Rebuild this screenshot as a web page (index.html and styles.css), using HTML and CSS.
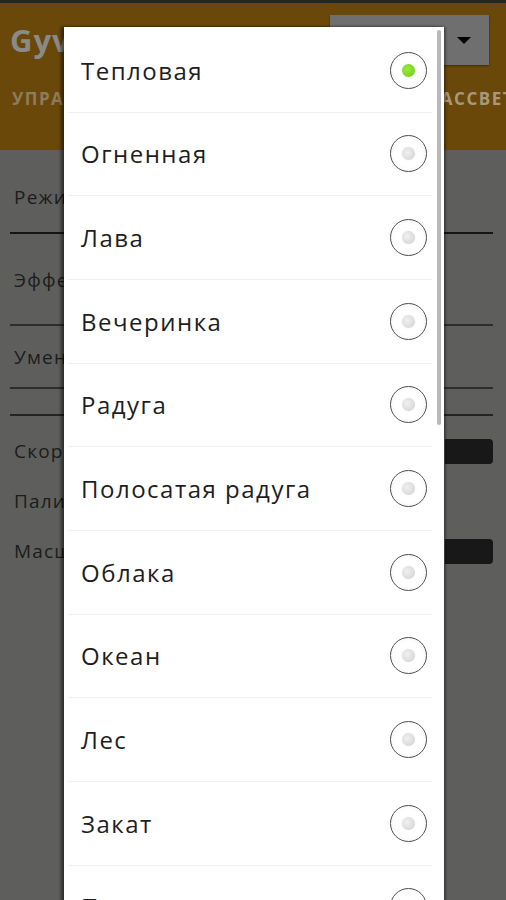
FILE: index.html
```html
<!DOCTYPE html>
<html lang="ru">
<head>
  <meta charset="UTF-8" />
  <meta name="viewport" content="width=device-width, initial-scale=1.0" />
  <title>GyverLamp</title>
  <link rel="stylesheet" href="styles.css">
</head>
<body>
  <div class="screen">
    <div class="statusline"></div>
    <header class="appbar">
      <div class="top">
        <h1>GyverLamp</h1>
        <div class="select"><span class="caret"></span></div>
      </div>
      <nav class="tabs">
        <span>УПРАВЛЕНИЕ</span>
        <span class="right">РАССВЕТ</span>
      </nav>
    </header>
    <main class="form">
      <div class="row r1"><span>Режим</span></div>
      <div class="row r2"><span>Эффект</span></div>
      <div class="row r3"><span>Уменьшить</span></div>
      <div class="row r4"></div>
      <div class="row slim"><span>Скорость</span><b class="slider"></b></div>
      <div class="row slim"><span>Палитра</span></div>
      <div class="row slim"><span>Масштаб</span><b class="slider"></b></div>
    </main>
  </div>

  <div class="dialog">
    <div class="scrollbar"></div>
    <ul class="options">
      <li><span>Тепловая</span><i class="radio checked"></i></li>
      <li><span>Огненная</span><i class="radio"></i></li>
      <li><span>Лава</span><i class="radio"></i></li>
      <li><span>Вечеринка</span><i class="radio"></i></li>
      <li><span>Радуга</span><i class="radio"></i></li>
      <li><span>Полосатая радуга</span><i class="radio"></i></li>
      <li><span>Облака</span><i class="radio"></i></li>
      <li><span>Океан</span><i class="radio"></i></li>
      <li><span>Лес</span><i class="radio"></i></li>
      <li><span>Закат</span><i class="radio"></i></li>
      <li><span>Полиция</span><i class="radio"></i></li>
    </ul>
  </div>
</body>
</html>
```

FILE: styles.css
```css
html, body {
  margin: 0;
  padding: 0;
  height: 900px;
  overflow: hidden;
}
body {
  font-family: "Open Sans", "DejaVu Sans", sans-serif;
  background-color: #5e5f5d;
  position: relative;
}
.statusline {
  height: 3px;
  background-color: #1e2a20;
}
.appbar {
  height: 147px;
  background-color: #6a4809;
  display: flex;
  flex-direction: column;
}
.top {
  display: flex;
  align-items: center;
  justify-content: space-between;
  padding: 12px 17px 0 10px;
  height: 50px;
}
.top h1 {
  margin: 0;
  font-size: 31px;
  font-weight: 700;
  letter-spacing: 1px;
  color: #8a8a8a;
  white-space: nowrap;
}
.select {
  width: 159px;
  height: 50px;
  background-color: #6f6f6f;
  box-shadow: 0 1px 2px rgba(0, 0, 0, 0.4);
  display: flex;
  align-items: center;
  justify-content: flex-end;
  padding-right: 18px;
  box-sizing: border-box;
}
.caret {
  width: 0;
  height: 0;
  border-left: 7px solid transparent;
  border-right: 7px solid transparent;
  border-top: 7px solid #000;
}
.tabs {
  display: flex;
  justify-content: space-between;
  padding: 22px 0 0 12px;
  font-size: 17px;
  font-weight: 700;
  letter-spacing: 1.5px;
  color: #8e7c5c;
  white-space: nowrap;
  overflow: hidden;
}
.tabs .right {
  margin-right: -8px;
  color: #a8987c;
}
.form {
  padding: 0 13px 0 10px;
}
.row {
  display: flex;
  align-items: center;
  justify-content: space-between;
  font-size: 19px;
  letter-spacing: 1.2px;
  color: #1b1c1b;
  padding-left: 4px;
  box-sizing: border-box;
}
.r1 {
  height: 84px;
  padding-top: 12px;
  border-bottom: 2px solid #141514;
}
.r2 {
  height: 92px;
  padding-top: 2px;
  border-bottom: 2px solid #2c2d2c;
}
.r3 {
  height: 63px;
  border-bottom: 2px solid #2c2d2c;
}
.r4 {
  height: 27px;
  border-bottom: 2px solid #232423;
}
.slim {
  height: 50px;
}
.r4 + .slim {
  margin-top: 10px;
}
.slider {
  width: 48px;
  height: 25px;
  background-color: #171817;
  border-radius: 0 4px 4px 0;
}

/* диалог выбора палитры */
.dialog {
  position: absolute;
  left: 64px;
  top: 27px;
  width: 380px;
  height: 900px;
  background-color: #ffffff;
  box-shadow: -3px 0 3px rgba(0, 0, 0, 0.5), 2px 0 2px rgba(0, 0, 0, 0.35);
  padding-top: 2px;
  box-sizing: border-box;
  overflow: hidden;
}
.scrollbar {
  position: absolute;
  right: 3px;
  top: 3px;
  width: 4px;
  height: 395px;
  border-radius: 2px;
  background-color: #b9b9b9;
}
.options {
  list-style: none;
  margin: 0;
  padding: 0;
}
.options li {
  height: 83.67px;
  box-sizing: border-box;
  margin: 0 12px 0 4px;
  padding: 0 5px 0 13px;
  border-bottom: 1px solid #f1f1f1;
  display: flex;
  align-items: center;
  justify-content: space-between;
  font-size: 24px;
  letter-spacing: 1.5px;
  color: #1e1e1e;
}
.radio {
  width: 37px;
  height: 37px;
  box-sizing: border-box;
  border-radius: 50%;
  border: 1.5px solid #505050;
  background: radial-gradient(circle, #ffffff 55%, #ececec 100%);
  display: flex;
  align-items: center;
  justify-content: center;
}
.radio::after {
  content: "";
  width: 13px;
  height: 13px;
  border-radius: 50%;
  background: radial-gradient(circle at 40% 40%, #f0f0f0, #d0d0d0);
  box-shadow: 0 0 1px rgba(0, 0, 0, 0.15);
}
.radio.checked::after {
  background: radial-gradient(circle at 40% 40%, #98ea3a, #6ccb12);
}
```
